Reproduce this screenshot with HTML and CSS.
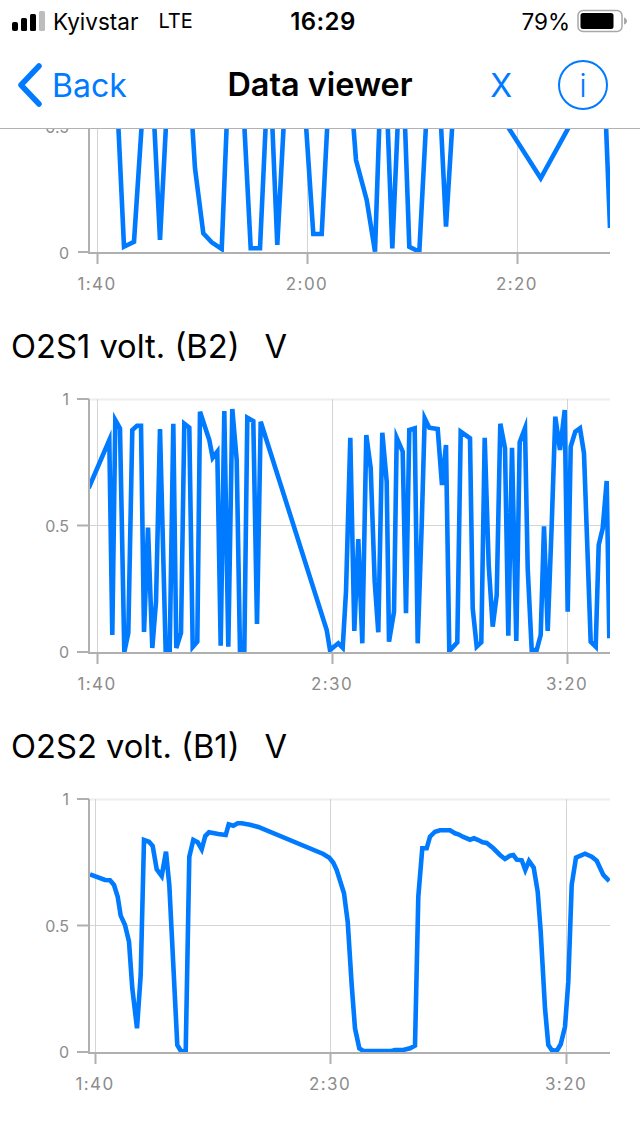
FILE: index.html
```html
<!DOCTYPE html>
<html lang="en">
<head>
<meta charset="utf-8">
<title>Data viewer</title>
<link rel="stylesheet" href="styles.css">
</head>
<body>
<div class="screen">
  <header class="header">
    <div class="status">
      <div class="status-left">
        <svg class="signal" width="33" height="20" viewBox="0 0 33 20">
          <rect x="0" y="11" width="6" height="9" rx="2" fill="#000"/>
          <rect x="9" y="7" width="6" height="13" rx="1.5" fill="#000"/>
          <rect x="18" y="3" width="6" height="17" rx="1.5" fill="#000"/>
          <rect x="27" y="0" width="6" height="20" rx="1.5" fill="#bdbdbd"/>
        </svg>
        <span class="carrier">Kyivstar</span>
        <span class="network">LTE</span>
      </div>
      <div class="clock">16:29</div>
      <div class="status-right">
        <span class="percent">79%</span>
        <svg class="battery" width="52" height="24" viewBox="0 0 52 24">
          <rect x="1" y="1.5" width="44" height="21" rx="5" fill="none" stroke="#a8a8a8" stroke-width="1.5"/>
          <rect x="3.5" y="4" width="33" height="16" rx="2.5" fill="#000"/>
          <path d="M47 8.500c2 .5 3 2 3 3.500s-1 3-3 3.500z" fill="#a8a8a8"/>
        </svg>
      </div>
    </div>
    <nav class="nav">
      <a class="back">
        <svg class="chevron" width="26" height="44" viewBox="0 0 26 44">
          <path d="M22 3 4 22l18 19" fill="none" stroke="#007aff" stroke-width="5.5" stroke-linecap="round" stroke-linejoin="round"/>
        </svg>
        <span>Back</span>
      </a>
      <h1 class="nav-title">Data viewer</h1>
      <div class="nav-actions">
        <span class="close">X</span>
        <span class="info">i</span>
      </div>
    </nav>
  </header>

  <svg class="chart" width="640" height="166" viewBox="0 129 640 166">
    <defs><clipPath id="clip1"><rect x="90" y="129" width="520" height="124"/></clipPath></defs>
    <path class="grid" d="M97.500 129V253M307.500 129V253M517.500 129V253"/>
    <text class="tick-label" x="69" y="133" text-anchor="end">0.5</text>
    <text class="tick-label" x="69" y="258.500" text-anchor="end">0</text>
    <polyline class="line" clip-path="url(#clip1)" points="118.300,125 124,246.700 134,241.700 141.700,125"/>
    <polyline class="line" clip-path="url(#clip1)" points="154.300,125 160,240 166,125"/>
    <polyline class="line" clip-path="url(#clip1)" points="192.300,125 195,168.300 203.300,233.300 211.700,242.300 221.700,249 226.700,125"/>
    <polyline class="line" clip-path="url(#clip1)" points="244.300,125 250.700,248.300 260,248.300 265.700,125"/>
    <polyline class="line" clip-path="url(#clip1)" points="272.300,125 277.300,245 283.700,125"/>
    <polyline class="line" clip-path="url(#clip1)" points="306,125 313.300,234 321.700,234 327.300,125"/>
    <polyline class="line" clip-path="url(#clip1)" points="353.300,125 356,160 366.700,200 375,251.700 379.300,125"/>
    <polyline class="line" clip-path="url(#clip1)" points="387.700,125 392.300,248.300 397.700,125"/>
    <polyline class="line" clip-path="url(#clip1)" points="405,125 409.300,246.700 419.300,251.700 426,125"/>
    <polyline class="line" clip-path="url(#clip1)" points="441,125 446,226.700 452.300,125"/>
    <polyline class="line" clip-path="url(#clip1)" points="506.700,125 540.700,178.300 570,125"/>
    <polyline class="line" clip-path="url(#clip1)" points="606,125 610,228"/>
    <path class="axis" d="M89 129V253M78 252H89M88 253H610M97.500 253V264M307.500 253V264M517.500 253V264"/>
    <text class="tick-x" x="97" y="289.500" text-anchor="middle">1:40</text>
    <text class="tick-x" x="307" y="289.500" text-anchor="middle">2:00</text>
    <text class="tick-x" x="517" y="289.500" text-anchor="middle">2:20</text>
  </svg>

  <h2 class="chart-title">O2S1 volt. (B2)<span class="unit">V</span></h2>
  <svg class="chart" width="640" height="310" viewBox="0 0 640 310">
    <defs><clipPath id="clip2"><rect x="89" y="0" width="521" height="268"/></clipPath></defs>
    <path class="grid-top" d="M89 14.500H610"/>
    <path class="grid" d="M89 140.500H610M97.500 14V268M332.500 14V268M567.500 14V268"/>
    <polyline class="line" clip-path="url(#clip2)" points="88.700,103 109.300,55 112.300,250 115.300,35 120,43.300 124.300,267 128.300,248 132.300,45 137,40.700 141,40.700 144,247 148,142.700 152.300,263 156,217 160,44 165.700,266.700 169.700,266.700 173.300,38.700 176.300,263 181,248 184.300,38.700 189.300,42.700 192.700,262 197.300,256.700 200,26.700 209.300,55 212.700,72.700 217.300,66.700 220.700,260.700 224.300,26 228.300,261.700 232.300,24 236.700,75 240,266.700 244.300,266.700 247.300,32.700 253.300,36 257,239 260.700,36.700 326.700,245 330,265 338.300,258.300 342.700,262.700 346,206.700 350.300,52.700 354.300,246 358.300,154 362.300,258.300 366.300,50 370.700,83.300 374.700,196.700 378.300,247.300 382.300,47.700 386.700,96.700 389,256.700 394,226.700 396.700,52.700 402.700,66.700 406,228.300 409.300,45 414.700,43.300 417.700,258.300 421.700,140 424.700,33.300 429.300,42.700 437.700,44 442,100 446,60 449.300,266 457.300,257.300 460.700,46.700 470,53.300 472.700,223.300 476.700,261.700 481.300,257.300 484.700,52.700 488.700,180 492.700,241.700 496.700,210 500.300,38.700 505,63.300 508.300,250.700 512,62.700 516.300,256 519.700,57.300 525,43.300 527.700,183.300 531.700,265 536.700,265 540.700,250 544,141.300 547.700,246 551.700,140 555.300,31.700 560,65 564.700,25 567.700,226.700 570.700,61.700 575.300,46.700 580,43.300 584,68.300 590.700,256.700 595.700,261.700 598.700,160 602.700,143.300 606.700,96 609.300,253.300"/>
    <path class="axis" d="M89 14V268M77 14H89M77 140.500H89M77 267H89M88 268H610M97.500 268V279M332.500 268V279M567.500 268V279"/>
    <text class="tick-label" x="69" y="20" text-anchor="end">1</text>
    <text class="tick-label" x="69" y="146.500" text-anchor="end">0.5</text>
    <text class="tick-label" x="69" y="273" text-anchor="end">0</text>
    <text class="tick-x" x="97" y="304.500" text-anchor="middle">1:40</text>
    <text class="tick-x" x="332" y="304.500" text-anchor="middle">2:30</text>
    <text class="tick-x" x="567" y="304.500" text-anchor="middle">3:20</text>
  </svg>

  <h2 class="chart-title">O2S2 volt. (B1)<span class="unit">V</span></h2>
  <svg class="chart" width="640" height="310" viewBox="0 0 640 310">
    <defs><clipPath id="clip3"><rect x="89" y="0" width="521" height="268"/></clipPath></defs>
    <path class="grid-top" d="M89 14.500H610"/>
    <path class="grid" d="M89 140.500H610M95.500 14V268M330.500 14V268M566.500 14V268"/>
    <polyline class="line" clip-path="url(#clip3)" points="90,89.300 105,95 110,95.300 114,100 117.700,111.700 120.700,130.700 125,140 129,156.700 132.300,203.300 137,243.300 140.700,190 144,55 149,56.700 152.700,61 156.700,84.300 161.700,91 166,66.700 169.300,100 177.300,260 180.700,265.700 185.700,266.700 189.300,71.700 193.300,55 197.700,57.300 201.700,64.300 205.300,51 209,47.300 218.300,49 225.700,50 228.700,39.300 233.300,40.700 237.700,38.300 241.700,38.300 250,39.700 258.300,42 323.300,69 329.300,72.700 333.300,77.700 336.700,85 344,108.300 347.700,136.700 351.700,200 355,243.300 359.300,263.300 363.300,266 391.700,266 395,265 403.300,265 410,263.300 415,260.700 418.300,111.700 422.300,63.300 426.700,63.300 430,51.700 435,46.700 440,45.300 450,45.300 455,48.300 458.300,49.300 463.300,52 470,54.700 474,53.300 478.300,55 482.700,57.300 486.700,58 493.300,63.300 500,70 505,74 510,70.700 513.300,70 516.700,74.700 521.700,75.300 525.300,85 529,76 533.700,82.700 537.700,106.700 540.700,146.700 545,223.300 548.300,260 551.700,265 556.700,266 560.700,259.300 565,241.700 568.300,196.700 571.700,100 576,72.700 585,68.700 591.700,71.700 596.700,75.700 603.300,90 609.300,96"/>
    <path class="axis" d="M89 14V268M77 14H89M77 140.500H89M77 267H89M88 268H610M95.500 268V279M330.500 268V279M566.500 268V279"/>
    <text class="tick-label" x="69" y="20" text-anchor="end">1</text>
    <text class="tick-label" x="69" y="146.500" text-anchor="end">0.5</text>
    <text class="tick-label" x="69" y="273" text-anchor="end">0</text>
    <text class="tick-x" x="95" y="304.500" text-anchor="middle">1:40</text>
    <text class="tick-x" x="330" y="304.500" text-anchor="middle">2:30</text>
    <text class="tick-x" x="566" y="304.500" text-anchor="middle">3:20</text>
  </svg>
</div>
</body>
</html>
```

FILE: styles.css
```css
* { box-sizing: border-box; }
html, body { margin: 0; padding: 0; background: #fff; }
body { font-family: Inter, "Liberation Sans", sans-serif; color: #000; overflow: hidden; }
.screen { width: 640px; height: 1136px; overflow: hidden; background: #fff; }

.header { height: 129px; border-bottom: 1px solid #b2b2b2; }

.status { height: 42px; display: grid; grid-template-columns: 1fr auto 1fr; align-items: center; font-size: 22.5px; }
.status-left { display: flex; align-items: center; padding-left: 12px; }
.signal { flex: none; }
.carrier { margin-left: 8px; }
.network { margin-left: 20px; font-size: 20px; }
.clock { font-weight: 600; font-size: 24px; letter-spacing: 0.4px; padding-left: 6px; }
.status-right { display: flex; align-items: center; justify-content: flex-end; padding-right: 11px; }
.battery { margin-left: 7px; flex: none; }

.nav { height: 86px; display: grid; grid-template-columns: 1fr auto 1fr; align-items: center; padding: 0 17px; }
.back { display: flex; align-items: center; gap: 9px; color: #007aff; font-size: 32px; }
.chevron { flex: none; }
.nav-title { margin: 0; font-size: 32.4px; font-weight: 600; position: relative; top: -1px; }
.nav-actions { display: flex; align-items: center; justify-content: flex-end; gap: 46px; padding-right: 15px; color: #007aff; }
.close { font-size: 32px; }
.info { width: 50px; height: 50px; border: 2px solid #007aff; border-radius: 50%; display: flex; align-items: center; justify-content: center; font-size: 32px; font-weight: 300; }

.chart { display: block; flex: none; }
.chart-title { margin: 0; height: 90px; padding: 12px 0 0 11px; display: flex; align-items: center; font-size: 32.7px; font-weight: 400; }
.unit { margin-left: 25px; }

.grid { fill: none; stroke: #d4d4d4; stroke-width: 1; }
.grid-top { fill: none; stroke: #eeeeee; stroke-width: 2; }
.axis { fill: none; stroke: #b0b0b0; stroke-width: 2; }
.line { fill: none; stroke: #007aff; stroke-width: 4.6; stroke-linejoin: miter; stroke-miterlimit: 6; }
.tick-label { font-family: Inter, "Liberation Sans", sans-serif; font-size: 16px; fill: #8c8c8c; }
.tick-x { font-family: Inter, "Liberation Sans", sans-serif; font-size: 17px; letter-spacing: 1.4px; fill: #8c8c8c; }
```
